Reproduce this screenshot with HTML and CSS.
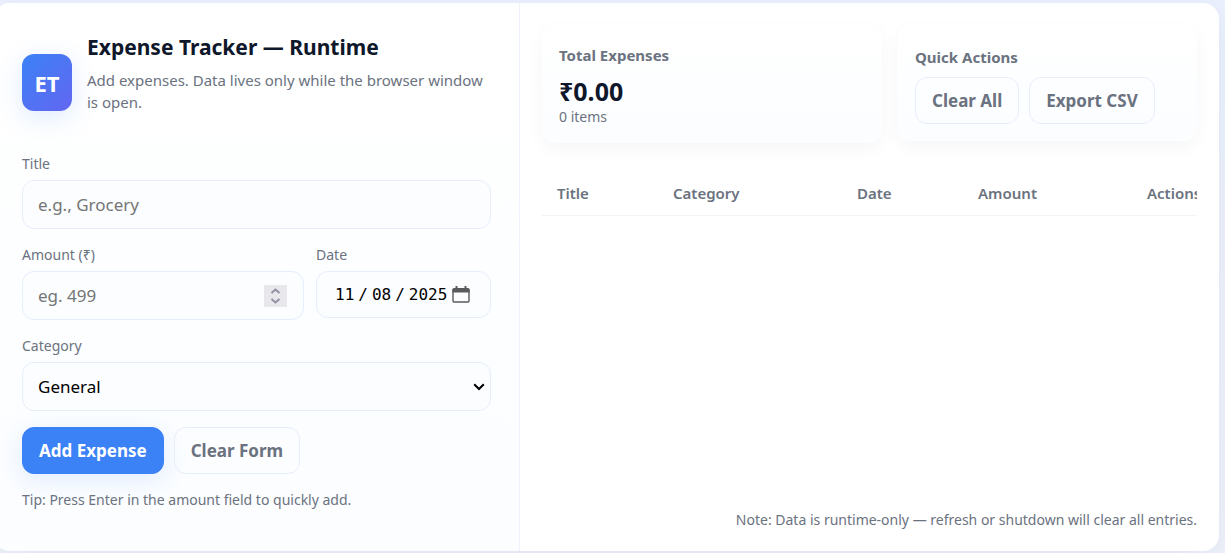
FILE: index.html
```html
<!DOCTYPE html>
<html lang="en">
<head>
<meta charset="utf-8">
<title>Expense Tracker — Runtime</title>
<link rel="stylesheet" href="styles.css">
</head>
<body>
<main class="app">
  <section class="panel">
    <header class="brand">
      <div class="logo">ET</div>
      <div class="brand-text">
        <h1>Expense Tracker — Runtime</h1>
        <p>Add expenses. Data lives only while the browser window is open.</p>
      </div>
    </header>
    <form class="form">
      <div class="field">
        <label for="title">Title</label>
        <input class="control" id="title" type="text" placeholder="e.g., Grocery">
      </div>
      <div class="row">
        <div class="field grow">
          <label for="amount">Amount (₹)</label>
          <div class="control-wrap">
            <input class="control" id="amount" type="number" placeholder="eg. 499">
            <svg class="spinner" viewBox="0 0 23 22" aria-hidden="true"><path d="M0 0h23v22H0z" fill="#e8e7eb"/><path d="M7.500 8 11.500 4.500 15.500 8M7.500 14 11.500 17.500 15.500 14" fill="none" stroke="#9490a0" stroke-width="2"/></svg>
          </div>
        </div>
        <div class="field date-field">
          <label for="date">Date</label>
          <div class="control-wrap">
            <input class="control date" id="date" type="date" value="2025-11-08">
            <svg class="calendar" viewBox="0 0 18 18" aria-hidden="true"><rect x="1" y="3" width="16" height="13" rx="1" fill="none" stroke="#5a5a5a" stroke-width="1.400"/><path d="M2 2H16L17.500 3V6.500H.5V3ZM3.500 0h2v3h-2ZM12.500 0h2v3h-2Z" fill="#5a5a5a"/></svg>
          </div>
        </div>
      </div>
      <div class="field">
        <label for="category">Category</label>
        <div class="control-wrap">
          <select class="control" id="category"><option>General</option></select>
          <svg class="chevron" viewBox="0 0 12 8" aria-hidden="true"><path d="M1.2 1.2 6 6 10.8 1.2" fill="none" stroke="#000" stroke-width="2"/></svg>
        </div>
      </div>
      <div class="buttons">
        <button class="btn primary" type="button">Add Expense</button>
        <button class="btn" type="button">Clear Form</button>
      </div>
      <p class="tip">Tip: Press Enter in the amount field to quickly add.</p>
    </form>
  </section>
  <section class="content">
    <div class="cards">
      <div class="card total">
        <h2>Total Expenses</h2>
        <div class="sum">₹0.00</div>
        <div class="count">0 items</div>
      </div>
      <div class="card quick">
        <h2>Quick Actions</h2>
        <div class="buttons">
          <button class="btn" type="button">Clear All</button>
          <button class="btn" type="button">Export CSV</button>
        </div>
      </div>
    </div>
    <div class="table-wrap">
      <table>
        <thead>
          <tr><th class="c-title">Title</th><th class="c-category">Category</th><th class="c-date">Date</th><th class="c-amount">Amount</th><th>Actions</th></tr>
        </thead>
        <tbody></tbody>
      </table>
    </div>
    <footer class="note">Note: Data is runtime-only — refresh or shutdown will clear all entries.</footer>
  </section>
</main>
</body>
</html>
```
FILE: styles.css
```css
* { box-sizing: border-box; }
body {
  margin: 0;
  padding: 3px 6px 2px 0;
  min-height: 100vh;
  display: flex;
  overflow: hidden;
  background: linear-gradient(180deg, #eaf0fe, #eef2fb);
  color: #6b7280;
  font-family: "Noto Sans", "Open Sans", sans-serif;
  font-size: 14px;
  line-height: 20px;
}
h1, h2, p { margin: 0; }
.app {
  flex: 1;
  margin-left: -6px;
  display: grid;
  grid-template-columns: 526fr 699fr;
  background: #fff;
  border-radius: 16px;
  overflow: hidden;
  box-shadow: 0 8px 30px rgba(15, 23, 42, 0.06);
}
.panel {
  padding: 28px;
  border-right: 1px solid #eef2fb;
  background: linear-gradient(180deg, #fff, #fbfdff);
}
.brand {
  display: flex;
  align-items: center;
  gap: 15px;
  margin-bottom: 20px;
}
.logo {
  flex: none;
  width: 50px;
  height: 57px;
  display: grid;
  place-items: center;
  border-radius: 12px;
  background: linear-gradient(135deg, #3b82f6, #6366f1);
  box-shadow: 0 6px 24px rgba(59, 130, 246, 0.16);
  color: #fff;
  font-size: 22px;
  font-weight: 700;
}
.brand-text { padding-bottom: 21px; }
h1 {
  margin-bottom: 6px;
  color: #0f172a;
  font-size: 21px;
  font-weight: 700;
  line-height: 32px;
}
.brand p { font-size: 15px; line-height: 22px; }
.form, .field { display: flex; flex-direction: column; }
.form { gap: 16px; }
.field { gap: 6px; }
.row { display: flex; align-items: flex-start; gap: 12px; }
.grow { flex: 1; }
.date-field { width: 175px; }
.control {
  width: 100%;
  height: 49px;
  padding: 0 15px;
  border: 1px solid #e6eefc;
  border-radius: 12px;
  background: #fbfdff;
  color: #000;
  font-family: "Noto Sans", "Open Sans", sans-serif;
  font-size: 17px;
}
.control::placeholder { color: #757575; }
.control::-webkit-inner-spin-button { opacity: 0; }
.date {
  height: 47px;
  padding: 0 17px;
  font-family: "DejaVu Sans Mono", monospace;
  font-size: 16px;
}
.date::-webkit-datetime-edit-text { padding: 0 3px; }
.date::-webkit-calendar-picker-indicator { display: none; }
.control-wrap { display: grid; align-items: center; }
.control-wrap > * { grid-area: 1 / 1; }
.control-wrap > svg { justify-self: end; pointer-events: none; }
select.control { appearance: none; }
.chevron { width: 12px; height: 8px; margin-right: 6px; }
.spinner { width: 23px; height: 22px; margin-right: 17px; }
.calendar { width: 18px; height: 18px; margin-right: 21px; }
.buttons { display: flex; gap: 10px; }
.btn {
  height: 47px;
  padding: 0 16px;
  border: 1px solid #e6eefc;
  border-radius: 12px;
  background: transparent;
  color: #6b7280;
  font-family: "Noto Sans", "Open Sans", sans-serif;
  font-size: 17px;
  font-weight: 700;
}
.primary {
  border-color: #3b82f6;
  background: #3b82f6;
  box-shadow: 0 6px 24px rgba(59, 130, 246, 0.14);
  color: #fff;
}
.content {
  min-width: 0;
  padding: 22px 22px 21px;
  display: flex;
  flex-direction: column;
}
.cards { display: flex; align-items: flex-start; gap: 15px; }
.card {
  border-radius: 14px;
  background: linear-gradient(180deg, #fff, #fbfdff);
  box-shadow: 0 6px 18px rgba(15, 23, 42, 0.04);
}
.total { flex: 1; padding: 20px 17px 16px; }
.quick { width: 300px; padding: 22px 18px 17px; }
.quick h2 { margin-bottom: 10px; }
h2 { font-size: 15px; font-weight: 700; line-height: 20px; }
.sum {
  margin-top: 10px;
  color: #0f172a;
  font-size: 25px;
  font-weight: 700;
  line-height: 32px;
}
.table-wrap { margin-top: 28px; overflow: hidden; }
table {
  width: 690px;
  border-collapse: collapse;
  table-layout: fixed;
}
th {
  height: 44px;
  padding: 0 15px;
  border-bottom: 1px solid #f1f3f6;
  font-size: 15px;
  font-weight: 600;
  text-align: left;
}
.c-title { width: 116px; }
.c-category { width: 184px; }
.c-date { width: 121px; }
.c-amount { width: 169px; }
.note { margin-top: auto; text-align: right; }
```
